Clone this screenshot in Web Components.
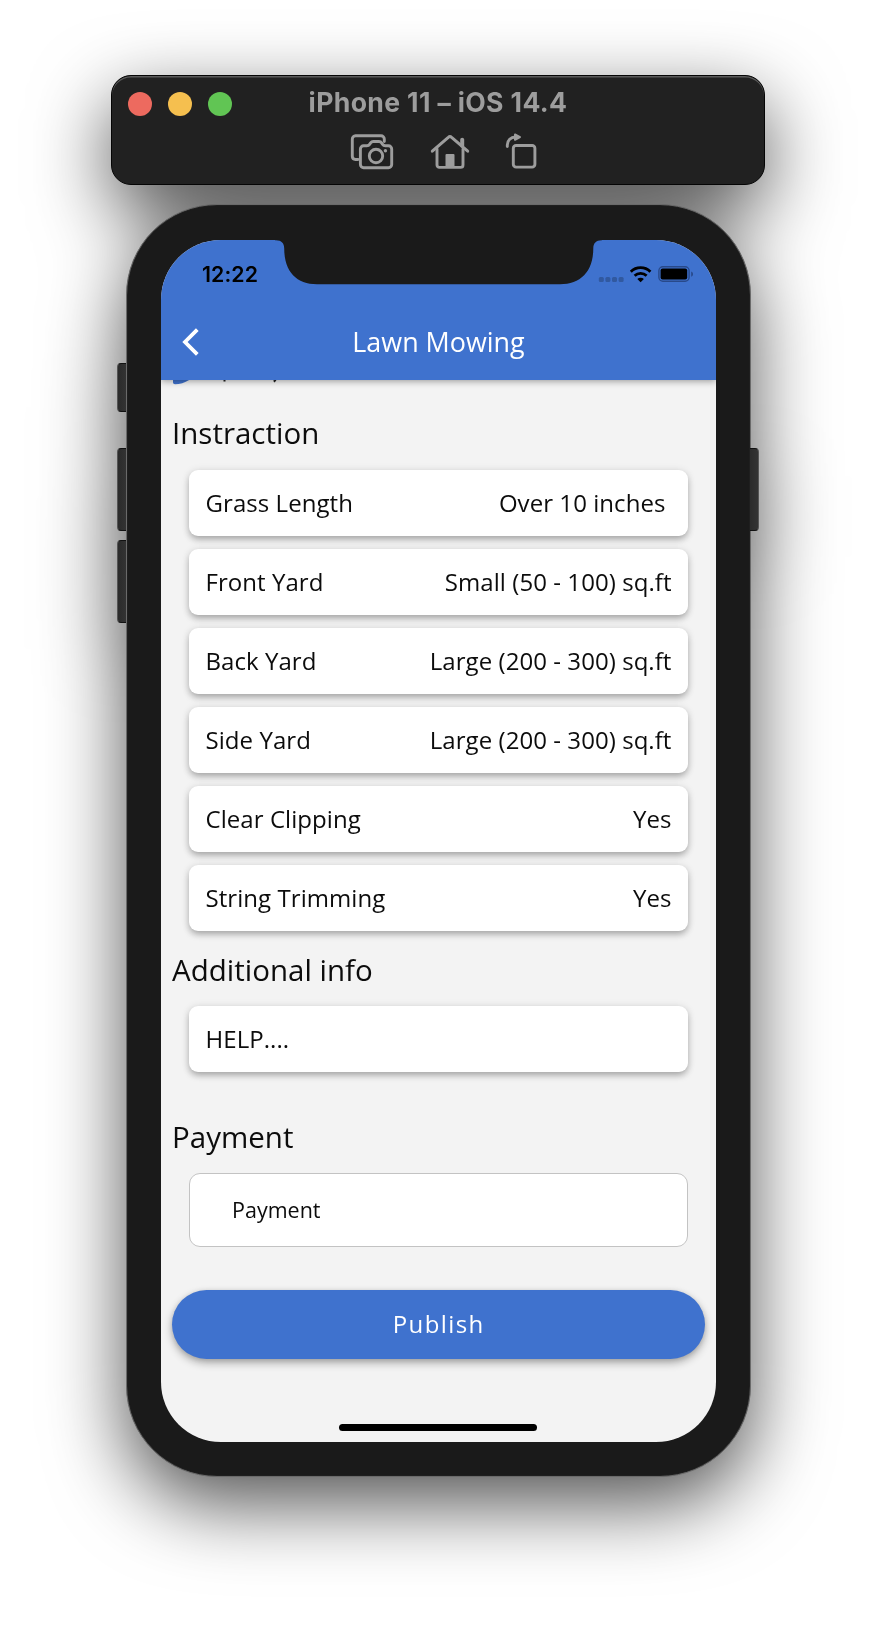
<!DOCTYPE html>
<html lang="en">
<head>
<meta charset="utf-8">
<title>Lawn Mowing</title>
<style>
html,body{margin:0;background:#fff}
body{width:876px;height:1626px;overflow:hidden;font-family:"Open Sans","Noto Sans",sans-serif;color:#0c0c0c}
</style>
</head>
<body>
<sim-stage>
  <sim-toolbar>iPhone 11 – iOS 14.4</sim-toolbar>
  <phone-frame>
    <app-header>Lawn Mowing</app-header>
    <scroll-remnant></scroll-remnant>
    <section-title style="margin-top:26.7px">Instraction</section-title>
    <card-list>
      <info-row label="Grass Length" style="--end:22.5px">Over 10 inches</info-row>
      <info-row label="Front Yard">Small (50 - 100) sq.ft</info-row>
      <info-row label="Back Yard">Large (200 - 300) sq.ft</info-row>
      <info-row label="Side Yard">Large (200 - 300) sq.ft</info-row>
      <info-row label="Clear Clipping">Yes</info-row>
      <info-row label="String Trimming">Yes</info-row>
    </card-list>
    <section-title style="margin-top:17.5px">Additional info</section-title>
    <card-list><info-row label="HELP...."></info-row></card-list>
    <section-title style="margin-top:44.2px">Payment</section-title>
    <pay-field>Payment</pay-field>
    <publish-button>Publish</publish-button>
  </phone-frame>
</sim-stage>
<script>
const define = (name, html, setup) => {
  const t = document.createElement('template');
  t.innerHTML = html;
  customElements.define(name, class extends HTMLElement {
    constructor() {
      super();
      this.attachShadow({mode: 'open'}).append(t.content.cloneNode(true));
    }
    connectedCallback() { if (setup) setup(this, this.shadowRoot); }
  });
};

define('sim-stage', `<style>
:host{display:flex;flex-direction:column;align-items:center;box-sizing:border-box;width:876px;height:1626px;padding-top:75px;gap:19px;
filter:drop-shadow(0 27px 39px rgba(0,0,0,.68))}
</style><slot></slot>`);

define('sim-toolbar', `<style>
:host{display:block;box-sizing:border-box;width:654px;height:110px;border-radius:20px;background:#212121;border:1px solid #050505;box-shadow:inset 0 1.5px 0 #5a5a5a}
.top{display:grid;grid-template-columns:120px 1fr 120px;align-items:center;height:56px;padding:0 16px}
.lights{display:flex;gap:16px}
.lights i{width:24px;height:24px;border-radius:50%}
.name{font:700 26.6px/30px Inter,sans-serif;color:#9d9d9d;text-align:center;white-space:nowrap;letter-spacing:.36px;padding-bottom:4px}
svg{display:block}
</style>
<div class="top"><div class="lights"><i style="background:#ed6a5f"></i><i style="background:#f5bf4f"></i><i style="background:#61c554"></i></div>
<div class="name"><slot></slot></div></div>
<svg width="652" height="48" viewBox="112 132 652 48" fill="none" stroke="#9d9d9d" stroke-width="2.9" stroke-linejoin="round" stroke-linecap="round">
<path d="M358 159.500h-2.500a3.300 3.300 0 0 1-3.200-3.200V139a3.300 3.300 0 0 1 3.200-3.300H381a3.300 3.300 0 0 1 3.300 3.300v2.500"/>
<path d="M360.400 149a3.200 3.200 0 0 1 3.200-3.200h3.200c1.700 0 2.300-.6 3-1.700l.8-1.200c.8-1.100 1.300-1.400 2.600-1.400h5.800c1.300 0 1.900.3 2.600 1.400l.8 1.200c.7 1.100 1.300 1.700 3 1.700h3.100a3.200 3.200 0 0 1 3.200 3.200v15.500a3.200 3.200 0 0 1-3.200 3.200h-24.900a3.200 3.200 0 0 1-3.200-3.200z"/>
<circle cx="376" cy="156" r="6.700"/><circle cx="385.400" cy="150.700" r="1.700" fill="#9d9d9d" stroke="none"/>
<path d="M432.300 151.200 448.300 137.300a2.400 2.400 0 0 1 3.300 0L467.700 151.200" stroke-width="3"/>
<path d="M437 149v16a2.400 2.400 0 0 0 2.400 2.400h21.200a2.400 2.400 0 0 0 2.400-2.400v-16"/>
<path d="M462.200 139.800v6" stroke-width="4"/><rect x="445.500" y="154" width="9" height="13" rx="1" fill="#9d9d9d" stroke="none"/>
<rect x="513.300" y="145.500" width="21.600" height="21.600" rx="2.800"/>
<path d="M507.300 146.500v-1.500a8 8 0 0 1 8-8h2"/><path d="M515 134.400 520 137.100 515 139.800z" fill="#9d9d9d" stroke-width="2"/>
</svg>`);

define('phone-frame', `<style>
:host{display:block;position:relative;box-sizing:border-box;width:625px;height:1273px;padding:35px 34px 34px 35px;border-radius:91px;background:#1a1a1a;border:1px solid #6a6a6a;box-shadow:inset 0 0 1px 0 #555;margin-left:1px}
.btn{position:absolute;box-sizing:border-box;width:9px;background:linear-gradient(90deg,#2b2b2b,#333);border:1px solid #555;border-top-color:#111;border-bottom-color:#111}
.l{left:-10px;border-radius:4px 0 0 4px;border-right:0}.r{right:-9px;border-radius:0 4px 4px 0;border-left:0}
.screen{position:relative;display:flex;flex-direction:column;box-sizing:border-box;margin-left:-1px;width:555px;height:1202px;border-radius:60px;overflow:hidden;background:#f3f3f3}
.notch{position:absolute;left:113px;top:0;z-index:3}
.home{position:absolute;left:178px;top:1184px;width:198px;height:7px;border-radius:4px;background:#000}
</style>
<span class="btn l" style="top:158px;height:49px"></span><span class="btn l" style="top:243px;height:83px"></span><span class="btn l" style="top:335px;height:83px"></span><span class="btn r" style="top:243px;height:83px"></span>
<div class="screen"><slot></slot>
<svg class="notch" width="330" height="46" viewBox="274 239.700 330 46"><path d="M275 239H602V240H601.500C596 240 593.300 243 593.300 248C593.300 272 580 284 560 284H317C297 284 284.200 272 284.200 248C284.200 243 281.500 240 276 240H275Z" fill="#1a1a1a"/></svg>
<div class="home"></div></div>`);

define('app-header', `<style>
:host{display:block;flex:none;position:relative;z-index:2;height:139.500px;background:#3f72ce;color:#fff;box-shadow:0 1px 7px rgba(0,0,0,.4)}
.status{display:flex;align-items:center;box-sizing:border-box;height:65px;padding:2px 0 0 41px}
.time{font:600 21.300px/26px Inter,sans-serif;color:#000;width:71px;letter-spacing:.1px}
.status svg{margin-left:324px}
.bar{display:grid;grid-template-columns:60px 1fr 60px;align-items:center;height:74px}
.bar svg{margin-left:19px}
.title{font-size:26.900px;line-height:36px;text-align:center;white-space:nowrap}
</style>
<div class="status"><span class="time">12:22</span>
<svg width="98" height="20" viewBox="597 263 98 20"><g fill="#3159a0"><rect x="598.800" y="276" width="5" height="5" rx="1.500"/><rect x="605.400" y="276" width="5" height="5" rx="1.500"/><rect x="612" y="276" width="5" height="5" rx="1.500"/><rect x="618.600" y="276" width="5" height="5" rx="1.500"/></g>
<g fill="none" stroke="#000" stroke-width="2.800"><path d="M630.800 270.700a14 14 0 0 1 19.600 0"/><path d="M634.600 274.800a8.600 8.600 0 0 1 12 0"/></g><path d="M637.300 278a4.700 4.700 0 0 1 6.600 0L640.600 281.300z"/>
<rect x="658.900" y="265.700" width="30.200" height="14.600" rx="4" fill="none" stroke="#28498a" stroke-width="1.400"/><rect x="660.600" y="267.600" width="26.600" height="11" rx="2"/><path d="M691.200 270.500c2.400.8 2.400 4.400 0 5.200z" fill="#28498a"/></svg></div>
<div class="bar"><svg width="24" height="30" viewBox="180 327 24 30" fill="none" stroke="#fff" stroke-width="3.800"><path d="M197.300 329.700 185 342 197.300 354.300"/></svg><div class="title"><slot></slot></div></div>`);

define('scroll-remnant', `<style>:host{display:block;flex:none;height:6px}svg{display:block}</style>
<svg width="200" height="6" viewBox="161 379.500 200 6"><path d="M173 377H192.500C188 381 181 383.800 175 383.800Q173 383.800 173 382Z" fill="#3f72ce"/><path d="M224.500 377v4M276 377c-.1 2-.8 3.300-2.300 4" stroke="#222" stroke-width="2" fill="none"/></svg>`);

define('section-title', `<style>:host{display:block;flex:none;font-size:29.500px;line-height:42px;padding-left:11px;white-space:nowrap}</style><slot></slot>`);

define('card-list', `<style>:host{display:flex;flex:none;flex-direction:column;gap:13.200px;padding:15.600px 28px 0}</style><slot></slot>`);

define('info-row', `<style>
:host{display:flex;justify-content:space-between;align-items:center;box-sizing:border-box;height:65.900px;padding:0 var(--end,16.5px) 0 16.500px;border-radius:9px;background:#fff;box-shadow:0 4px 7px -1px rgba(0,0,0,.28),0 1px 8px rgba(0,0,0,.12);font-size:24px;line-height:34px;letter-spacing:.06px;white-space:nowrap}
</style><span class="label"></span><span><slot></slot></span>`,
(el, root) => { root.querySelector('.label').textContent = el.getAttribute('label'); });

define('pay-field', `<style>:host{display:flex;flex:none;align-items:center;box-sizing:border-box;height:73.500px;margin:14.800px 27.900px 0 27.500px;padding:1px 0 0 42.500px;border:1px solid #c3c3c3;border-radius:11px;background:#fff;font-size:21.500px;line-height:30px}</style><slot></slot>`);

define('publish-button', `<style>:host{display:flex;flex:none;align-items:center;justify-content:center;box-sizing:border-box;height:68.500px;margin:43.500px 11px 0 10.500px;border-radius:35px;background:#3f72ce;color:#fff;font-size:24px;line-height:34px;letter-spacing:1.400px;padding-left:1px;box-shadow:0 4px 8px rgba(0,0,0,.3),0 1px 5px rgba(0,0,0,.1)}</style><slot></slot>`);
</script>
</body>
</html>
